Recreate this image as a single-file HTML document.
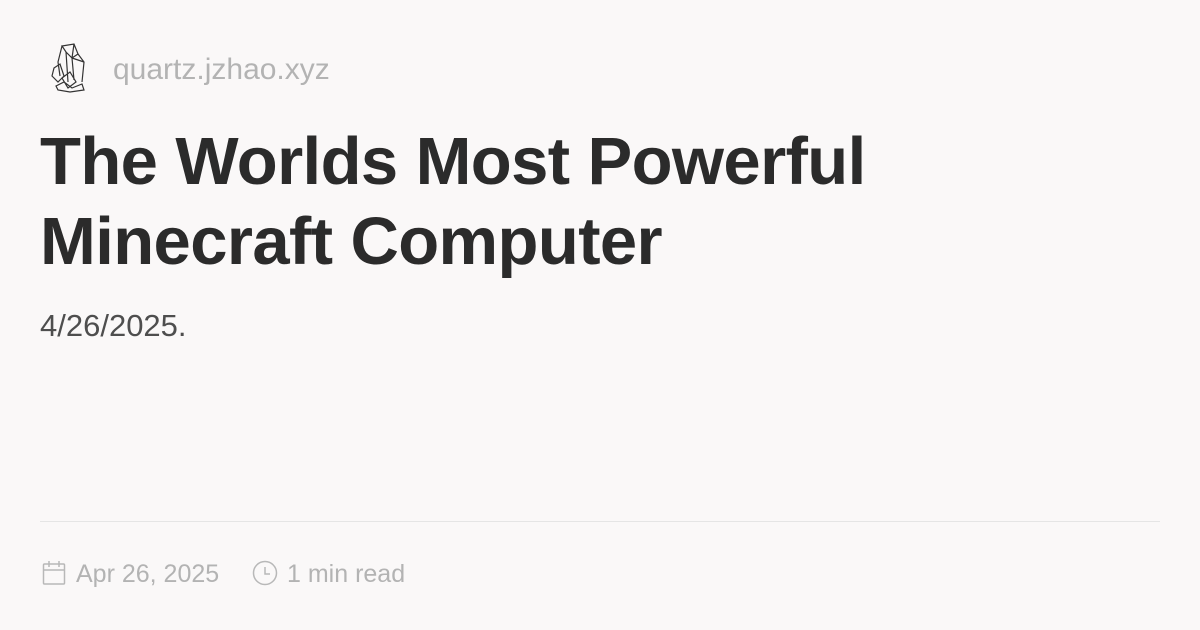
<!DOCTYPE html>
<html><head><meta charset="utf-8"><style>
body{margin:0;width:1200px;height:630px;background:#faf8f8;font-family:"Liberation Sans",sans-serif;position:relative;overflow:hidden}
.site{position:absolute;left:113px;top:52px;font-size:30px;color:#b3b3b3;line-height:36px}
h1{position:absolute;left:40px;top:122px;margin:0;font-size:67px;line-height:80px;font-weight:bold;color:#2b2b2b;letter-spacing:-0.6px;white-space:nowrap}
.date{position:absolute;left:40px;top:306px;font-size:31px;color:#4e4e4e;line-height:40px}
.hr{position:absolute;left:40px;right:40px;top:521px;height:1px;background:#e5e5e5}
.meta{position:absolute;top:558px;font-size:25px;color:#b3b3b3;line-height:32px}
</style></head><body>
<svg style="position:absolute;left:48px;top:42px" width="40" height="52" viewBox="0 0 40 52" fill="none" stroke="#333" stroke-width="1.2">
<path d="M14 4 L26 2 L30 12 L24 16 L18 10 Z M18 10 L20 40 M14 4 L10 20 L12 34 M26 2 L24 16 L26 38 M30 12 L36 20 L34 40 M24 16 L36 20 M6 26 L12 22 L16 34 L10 40 L4 34 Z M14 36 L22 30 L28 40 L20 46 Z M8 44 L16 40 L24 46 L34 42 L36 48 L22 50 L10 48 Z"/>
</svg>
<div class="site">quartz.jzhao.xyz</div>
<h1>The Worlds Most Powerful<br>Minecraft Computer</h1>
<div class="date">4/26/2025.</div>
<div class="hr"></div>
<svg style="position:absolute;left:42px;top:560px" width="24" height="26" viewBox="0 0 24 26" fill="none" stroke="#b8b8b8" stroke-width="1.5"><rect x="1.5" y="4" width="21" height="20" rx="1"/><path d="M1.5 10h21M7 1v6M17 1v6"/></svg>
<div class="meta" style="left:76px">Apr 26, 2025</div>
<svg style="position:absolute;left:252px;top:560px" width="26" height="26" viewBox="0 0 26 26" fill="none" stroke="#b8b8b8" stroke-width="1.5"><circle cx="13" cy="13" r="11.5"/><path d="M13 7v7h5"/></svg>
<div class="meta" style="left:287px">1 min read</div>
</body></html>
